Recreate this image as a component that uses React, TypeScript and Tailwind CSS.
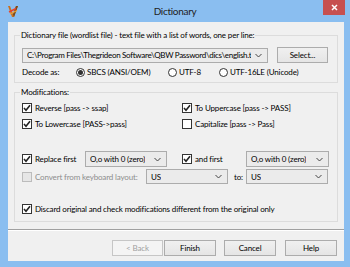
import type { ReactNode } from 'react';

const font = { fontFamily: 'Lato, "Open Sans", sans-serif' };

const Check = ({ checked = false, disabled = false }: { checked?: boolean; disabled?: boolean }) => (
  <span
    className={`flex h-[10px] w-[10px] shrink-0 items-center justify-center border ${
      disabled ? 'border-[#bcbcbc] bg-[#e6e6e6]' : 'border-[#333] bg-white'
    }`}
  >
    {checked && (
      <svg width="8" height="8" viewBox="0 0 8 8">
        <path d="M1 4 L3 6.2 L7 1.2" fill="none" stroke="#222" strokeWidth="1.6" />
      </svg>
    )}
  </span>
);

const Radio = ({ on = false }: { on?: boolean }) => (
  <span className="flex h-[9px] w-[9px] shrink-0 items-center justify-center rounded-full border border-[#333] bg-white">
    {on && <span className="h-[5px] w-[5px] rounded-full bg-[#333]" />}
  </span>
);

const Chevron = () => (
  <svg width="7" height="5" viewBox="0 0 7 5" className="shrink-0">
    <path d="M0.5 1 L3.5 4 L6.5 1" fill="none" stroke="#444" strokeWidth="1" />
  </svg>
);

const Combo = ({ text, className }: { text: string; className: string }) => (
  <div
    className={`flex items-center justify-between gap-[2px] overflow-hidden border border-[#acacac] bg-[#ebebeb] pl-[4px] pr-[5px] ${className}`}
  >
    <span className="overflow-hidden whitespace-nowrap">{text}</span>
    <Chevron />
  </div>
);

const Button = ({ children, className = '' }: { children: ReactNode; className?: string }) => (
  <div
    className={`flex h-[16px] items-center justify-center border border-[#acacac] bg-gradient-to-b from-[#f0f0f0] to-[#e5e5e5] ${className}`}
  >
    {children}
  </div>
);

const CheckRow = ({ checked, label, className = '' }: { checked?: boolean; label: string; className?: string }) => (
  <div className={`flex items-center gap-[3px] ${className}`}>
    <Check checked={checked} />
    <span className="whitespace-nowrap">{label}</span>
  </div>
);

const AppIcon = () => (
  <svg width="12" height="13" viewBox="0 0 12 13">
    <path d="M1 1 L5 12 L7 12 L11 1 L9 1 L6 9.5 L3 1 Z" fill="#c9701f" />
    <path d="M6 9.5 L9 1 L11 1 L7 12 Z" fill="#7a4a1c" />
    <path d="M2 7 L9 3.5" stroke="#e8412a" strokeWidth="1.4" />
    <path d="M3 9 L10 5.5" stroke="#f0a030" strokeWidth="1.1" />
  </svg>
);

export default function App() {
  return (
    <div
      className="flex h-[267px] w-[350px] flex-col bg-[#8abef0] text-[8px] leading-[12px] tracking-[-0.15px] text-black"
      style={font}
    >
      {/* Title bar */}
      <div className="flex h-[22px] shrink-0 items-start">
        <div className="flex h-[22px] w-[120px] items-center pl-[7px]">
          <AppIcon />
        </div>
        <div className="flex h-[22px] flex-1 items-center justify-center text-[10px] tracking-[-0.3px] text-[#222]">
          Dictionary
        </div>
        <div className="flex w-[120px] justify-end pr-[5px]">
          <div className="flex h-[15px] w-[22px] items-center justify-center bg-[#c75050]">
            <svg width="7" height="7" viewBox="0 0 7 7">
              <path d="M1 1 L6 6 M6 1 L1 6" stroke="#fff" strokeWidth="1.5" />
            </svg>
          </div>
        </div>
      </div>

      {/* Client area */}
      <div className="ml-[8px] mr-[6px] flex h-[239px] flex-col bg-[#f0f0f0]">
        {/* Dictionary file group */}
        <div className="mx-[6px] mt-[13px] flex flex-col border border-[#dcdcdc] pb-[4px] pl-[7px]">
          <span className="-ml-[2px] -mt-[7px] w-fit bg-[#f0f0f0] px-[1px] whitespace-nowrap">
            Dictionary file (wordlist file) - text file with a list of words, one per line:
          </span>
          <div className="mt-[6px] flex items-center gap-[9px]">
            <Combo
              text="C:\Program Files\Thegrideon Software\QBW Password\dics\english.t"
              className="h-[15px] w-[246px] tracking-[-0.3px]"
            />
            <Button className="w-[51px]">Select...</Button>
          </div>
          <div className="mt-[3px] flex h-[12px] items-center">
            <span className="w-[54px]">Decode as:</span>
            <div className="flex w-[92px] items-center gap-[2px]">
              <Radio on />
              <span>SBCS (ANSI/OEM)</span>
            </div>
            <div className="flex w-[51px] items-center gap-[2px]">
              <Radio />
              <span>UTF-8</span>
            </div>
            <div className="flex items-center gap-[2px]">
              <Radio />
              <span>UTF-16LE (Unicode)</span>
            </div>
          </div>
        </div>

        {/* Modifications group */}
        <div className="mx-[6px] mt-[9px] flex flex-col border border-[#dcdcdc] pb-[6px] pl-[7px]">
          <span className="-ml-[2px] -mt-[7px] w-fit bg-[#f0f0f0] px-[1px]">Modifications:</span>
          <div className="mt-[4px] flex h-[12px] items-center">
            <CheckRow checked label="Reverse [pass -> ssap]" className="w-[160px]" />
            <CheckRow checked label="To Uppercase [pass -> PASS]" />
          </div>
          <div className="mt-[4px] flex h-[12px] items-center">
            <CheckRow checked label="To Lowercase [PASS->pass]" className="w-[160px]" />
            <CheckRow label="Capitalize [pass -> Pass]" />
          </div>
          <div className="mt-[21px] flex h-[16px] items-center">
            <CheckRow checked label="Replace first" className="w-[63px]" />
            <Combo text="O,o with 0 (zero)" className="h-[16px] w-[82px]" />
            <div className="w-[15px]" />
            <CheckRow checked label="and first" className="w-[64px]" />
            <Combo text="O,o with 0 (zero)" className="h-[16px] w-[83px]" />
          </div>
          <div className="mt-[2px] flex h-[15px] items-center">
            <div className="flex w-[124px] items-center gap-[3px]">
              <Check disabled />
              <span className="whitespace-nowrap text-[#8d8d8d]">Convert from keyboard layout:</span>
            </div>
            <Combo text="US" className="h-[15px] w-[82px]" />
            <span className="w-[18px] pl-[6px]">to:</span>
            <Combo text="US" className="h-[15px] w-[82px]" />
          </div>
          <div className="mt-[19px] flex h-[12px] items-center">
            <CheckRow checked label="Discard original and check modifications different from the original only" />
          </div>
        </div>

        {/* Separator */}
        <div className="mt-[7px] h-[1px] bg-[#a0a0a0]" />
        <div className="h-[1px] bg-white" />

        {/* Buttons */}
        <div className="mt-[9px] flex items-center justify-end pr-[7px]">
          <div className="flex h-[16px] w-[51px] items-center justify-center border border-[#c6c6c6] bg-[#f4f4f4] text-[#a0a0a0]">
            &lt; Back
          </div>
          <Button className="ml-[1px] w-[52px] border-[#3c7fb1]">Finish</Button>
          <Button className="ml-[8px] w-[52px]">Cancel</Button>
          <Button className="ml-[9px] w-[52px]">Help</Button>
        </div>
      </div>
    </div>
  );
}
